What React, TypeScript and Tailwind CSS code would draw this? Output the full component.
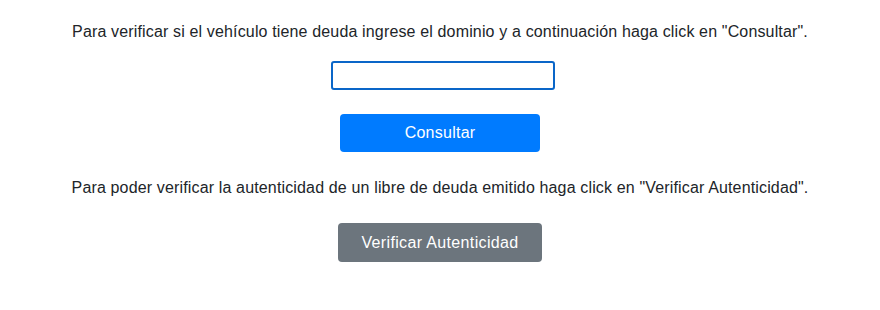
export default function App() {
  return (
    <div className="w-[880px] h-[310px] overflow-hidden bg-white font-['Liberation_Sans',Arial,sans-serif] text-[#212529]">
      <div className="flex flex-col items-center pt-[22px]">
        <p className="text-[16px] leading-[20px] tracking-[0.15px]">
          Para verificar si el vehículo tiene deuda ingrese el dominio y a continuación haga click en "Consultar".
        </p>
        <input
          type="text"
          className="mt-[19px] ml-[5px] w-[224px] h-[29px] rounded-[3px] border-2 border-[#0a66c8] bg-white outline-none"
        />
        <button className="mt-[24px] w-[200px] h-[38px] rounded-[4px] bg-[#007bff] text-white text-[16px] tracking-[0.25px]">
          Consultar
        </button>
        <p className="mt-[26px] text-[16px] leading-[20px] tracking-[0.15px]">
          Para poder verificar la autenticidad de un libre de deuda emitido haga click en "Verificar Autenticidad".
        </p>
        <button className="mt-[25px] w-[204px] h-[39px] rounded-[4px] bg-[#6c757d] text-white text-[16px] tracking-[0.35px]">
          Verificar Autenticidad
        </button>
      </div>
    </div>
  );
}
